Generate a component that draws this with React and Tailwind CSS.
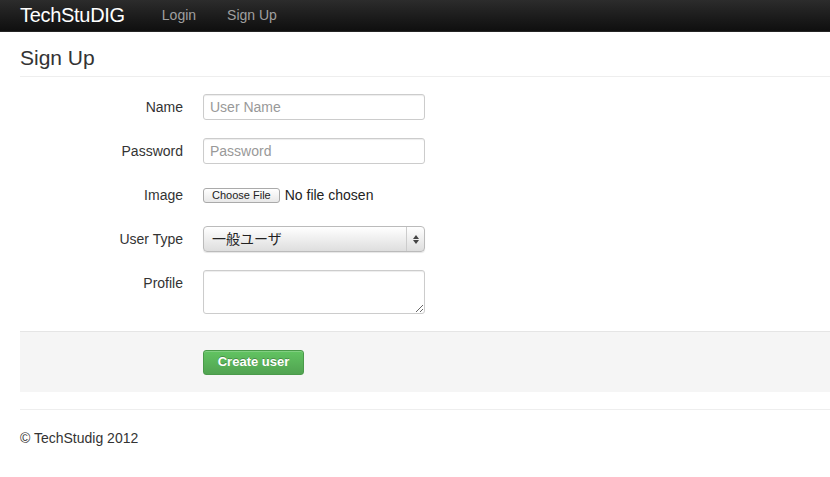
import React from "react";

const font = { fontFamily: '"Liberation Sans", Arial, sans-serif' };

const Row = ({ label, children, top = false, mb = "mb-[18px]" }) => (
  <div className={`flex ${top ? "items-start" : "items-center"} ${mb}`}>
    <label
      className={`w-[163px] text-right text-[14px] text-[#333] ${top ? "pt-[3px]" : ""}`}
    >
      {label}
    </label>
    <div className="ml-[20px]">{children}</div>
  </div>
);

export default function App() {
  return (
    <div className="w-[830px] h-[477px] overflow-hidden bg-white text-[#333]" style={font}>
      <div className="h-[32px] bg-gradient-to-b from-[#2c2c2c] to-[#0f0f0f] border-b border-[#252525] flex items-center pl-[20px] pb-[1px]">
        <a className="text-[20px] text-white tracking-[-0.3px] leading-none mr-[37px]">TechStuDIG</a>
        <a className="text-[14px] text-[#a0a0a0] mr-[31px]">Login</a>
        <a className="text-[14px] text-[#a0a0a0]">Sign Up</a>
      </div>

      <div className="pl-[20px]">
        <div className="pt-[14px] pb-[6px] border-b border-[#eee]">
          <h1 className="text-[21px] leading-[24px] text-[#333]">Sign Up</h1>
        </div>

        <form className="pt-[17px]">
          <Row label="Name">
            <input
              placeholder="User Name"
              className="w-[222px] h-[26px] border border-[#ccc] rounded-[3px] px-[6px] text-[14px] placeholder:text-[#999] shadow-[inset_0_1px_1px_rgba(0,0,0,0.075)]"
            />
          </Row>
          <Row label="Password">
            <input
              placeholder="Password"
              className="w-[222px] h-[26px] border border-[#ccc] rounded-[3px] px-[6px] text-[14px] placeholder:text-[#999] shadow-[inset_0_1px_1px_rgba(0,0,0,0.075)]"
            />
          </Row>
          <Row label="Image">
            <div className="flex items-center h-[26px] pt-[1px]">
              <span className="h-[15px] px-[8px] flex items-center text-[11px] text-[#222] border border-[#aaa] rounded-[3px] bg-gradient-to-b from-white to-[#e8e8e8]">
                Choose File
              </span>
              <span className="ml-[5px] text-[14px] text-[#222]">No file chosen</span>
            </div>
          </Row>
          <Row label="User Type">
            <div className="w-[222px] h-[26px] border border-[#bbb] rounded-[4px] bg-gradient-to-b from-white to-[#dedede] flex shadow-[0_1px_1px_rgba(0,0,0,0.1)]">
              <span
                className="flex-1 pl-[8px] text-[14px] text-[#222] leading-[24px]"
                style={{ fontFamily: '"Liberation Sans", "Noto Sans CJK JP", sans-serif' }}
              >
                一般ユーザ
              </span>
              <span className="w-[18px] border-l border-[#ccc] flex flex-col items-center justify-center gap-[1px]">
                <svg width="6" height="4" viewBox="0 0 6 4"><path d="M3 0 L6 4 L0 4 Z" fill="#444" /></svg>
                <svg width="6" height="4" viewBox="0 0 6 4"><path d="M0 0 L6 0 L3 4 Z" fill="#444" /></svg>
              </span>
            </div>
          </Row>
          <Row label="Profile" top mb="mb-[17px]">
            <textarea className="w-[222px] h-[44px] border border-[#ccc] rounded-[3px] block resize-y shadow-[inset_0_1px_1px_rgba(0,0,0,0.075)]" />
          </Row>

          <div className="bg-[#f5f5f5] border-t border-[#e5e5e5] h-[61px] flex items-center pl-[183px]">
            <button
              type="button"
              className="h-[25px] w-[101px] rounded-[3px] text-white text-[13px] font-bold bg-gradient-to-b from-[#62c462] to-[#51a351] border border-[#4a9a4a] shadow-[inset_0_1px_0_rgba(255,255,255,0.2)]"
              style={{ textShadow: "0 -1px 0 rgba(0,0,0,0.25)" }}
            >
              Create user
            </button>
          </div>
        </form>

        <div className="mt-[17px] border-t border-[#eee] pt-[18px]">
          <p className="text-[14px] text-[#333]">© TechStudig 2012</p>
        </div>
      </div>
    </div>
  );
}
